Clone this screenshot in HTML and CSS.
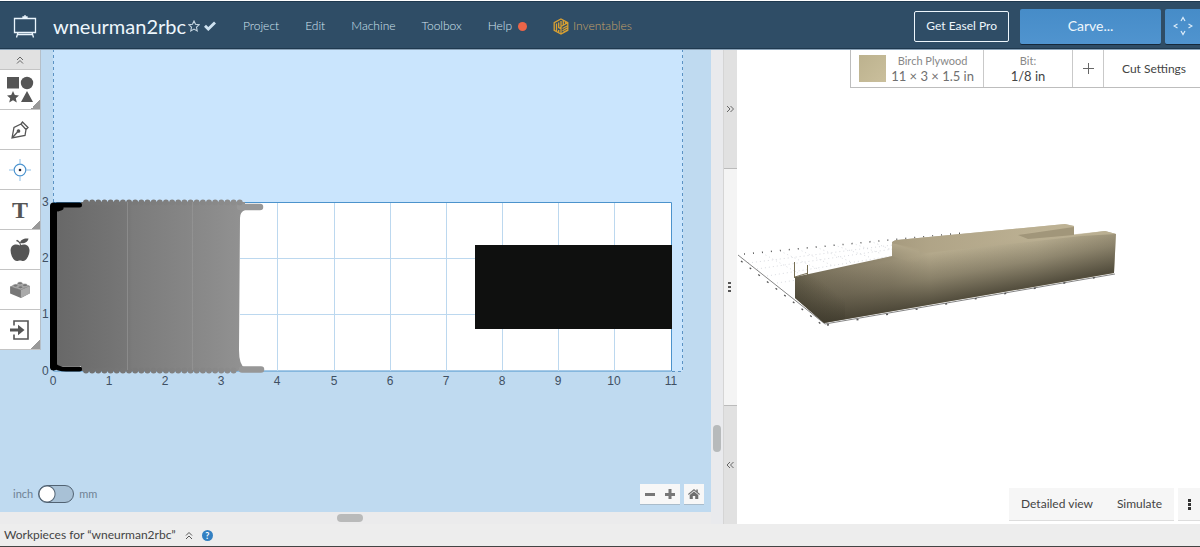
FILE: index.html
```html
<!DOCTYPE html>
<html lang="en">
<head>
<meta charset="utf-8">
<title>wneurman2rbc - Easel</title>
<link rel="stylesheet" href="styles.css">
</head>
<body>
<header class="topbar">
  <a class="logo" href="#" aria-label="Easel home">
    <svg width="24" height="24" viewBox="0 0 24 24" fill="none" stroke="#eaf5fd" stroke-width="1.3"><path d="M1.5 4.5h21v14h-21zM10 4.500v-1.500h4v1.500M12 1v2M5 18.500l-1.500 5M19 18.500l1.500 5M4.500 20.500h15"/></svg>
  </a>
  <h1 class="title">wneurman2rbc</h1>
  <button class="star" aria-label="Favorite"><svg width="12" height="12" viewBox="0 0 12 12" fill="none" stroke="#c6d6e2" stroke-width="1.100"><path d="M6 1l1.500 3.300 3.700.4-2.700 2.500.7 3.700L6 9.100l-3.200 1.800.7-3.700L.8 4.700l3.700-.4z"/></svg></button>
  <svg class="saved" width="12" height="10" viewBox="0 0 12 10" fill="none" stroke="#cfe2f0" stroke-width="2.800"><path d="M1 4.800l3.300 3.300L11 1.500"/></svg>
  <nav class="menu">
    <button>Project</button>
    <button>Edit</button>
    <button>Machine</button>
    <button>Toolbox</button>
    <button>Help<span class="dot"></span></button>
    <a href="#" class="inv"><svg width="16" height="17" viewBox="0 0 16 17" fill="none" stroke="#d9a032" stroke-width="1.300"><path d="M8 1l6.800 3.700v7.600L8 16l-6.800-3.700V4.700zM8 8.500V16M8 8.500l6.800-3.800M3.500 5.500v7.500M5.700 4.500v5l2.300 1.200M5.700 12v2.500M8 3v5.500M10.300 2.500v4.700M9.500 10.500l5-2.800M9.500 12.700l5-2.800M9.500 14.800l5-2.800M12.500 3.500v2"/></svg>Inventables</a>
  </nav>
  <button class="pro">Get Easel Pro</button>
  <button class="carve">Carve...</button>
  <button class="jog" aria-label="Jog machine"><svg width="20" height="20" viewBox="0 0 20 20" fill="none" stroke="#dcecf9" stroke-width="1.200"><path d="M8 5l2-3.500L12 5M8 15l2 3.500 2-3.500M4.500 8L1 10l3.500 2M15.500 8l3.500 2-3.500 2"/></svg></button>
</header>

<main class="work">
  <section class="design">
    <div class="canvas">
      <svg class="drawing" viewBox="0 50 711 462" preserveAspectRatio="xMinYMin meet">
        <defs>
          <linearGradient id="depth"><stop offset="0" stop-color="#686868"/><stop offset=".38" stop-color="#777"/><stop offset=".4" stop-color="#7b7b7b"/><stop offset=".75" stop-color="#888"/><stop offset="1" stop-color="#929292"/></linearGradient>
          <linearGradient id="edge" gradientUnits="userSpaceOnUse" x1="84" x2="262" y1="0" y2="0"><stop stop-color="#6f6f6f"/><stop offset="1" stop-color="#929292"/></linearGradient>
        </defs>
        <path fill="#cae5fd" d="M53 49h630v322H53z"/>
        <path fill="none" stroke="#5c93c4" stroke-dasharray="3 3" d="M53.500 49v155M682.500 49v322.500M672 371.500h11"/>
        <path fill="#fff" stroke="#4c93cc" d="M53.500 202.500h618v168.500h-618z"/>
        <path stroke="#bcd8ef" fill="none" d="M277.500 203v168M334.500 203v168M390.500 203v168M446.500 203v168M502.500 203v168M558.500 203v168M614.500 203v168M240 258.500h431M240 314.500h431"/>
        <path fill="#0f100f" d="M475 245h197v84H475z"/>
        <path fill="url(#depth)" d="M57 207h24v-5h164v8q-5 2-5 8l-1 132q0 15 6 18l-7 3H81v-5H57z"/>
        <path fill="none" stroke="#979797" stroke-width="6.500" stroke-linecap="round" d="M240 207h20M242 369.500h19"/>
        <path fill="none" stroke="url(#edge)" stroke-width="6" stroke-linecap="round" stroke-dasharray="0 6.150" d="M86 202.500l159 .1M86 370.500l152 .1"/>
        <path stroke="#999" fill="none" opacity=".6" d="M127.500 202v168M192.500 202v168"/>
        <path fill="none" stroke="#000" stroke-width="7" stroke-linecap="round" stroke-linejoin="round" d="M53.500 206v161"/>
        <path fill="none" stroke="#000" stroke-width="5" stroke-linecap="round" stroke-linejoin="round" d="M79.500 205H57M79.500 369H66q-8 0-11-3M52.500 346v20M58 209l3-1"/>
        <g class="ruler">
          <text x="42" y="206">3</text><text x="42" y="262">2</text><text x="42" y="318">1</text><text x="42" y="375">0</text>
          <g text-anchor="middle"><text x="53" y="385">0</text><text x="109" y="385">1</text><text x="165" y="385">2</text><text x="221" y="385">3</text><text x="277" y="385">4</text><text x="334" y="385">5</text><text x="390" y="385">6</text><text x="446" y="385">7</text><text x="502" y="385">8</text><text x="558" y="385">9</text><text x="614" y="385">10</text><text x="671" y="385">11</text></g>
        </g>
      </svg>
      <div class="tools">
        <button class="collapse" aria-label="Collapse tools"><svg width="8" height="8" viewBox="0 0 8 8" fill="none" stroke="#666"><path d="M1 4l3-3 3 3M1 7.500l3-3 3 3"/></svg></button>
        <button class="more" aria-label="Shapes"><svg width="28" height="28" viewBox="0 0 28 28" fill="#555"><path d="M1 1h12v11.500H1z"/><circle cx="21" cy="7" r="6.200"/><path d="M7 15l1.800 4 4.200.4-3.200 2.900 1 4.200L7 24.200l-3.800 2.300 1-4.200L1 19.400l4.200-.4zM21 15l6 11H15z"/></svg></button>
        <button aria-label="Pen"><svg width="20" height="20" viewBox="0 0 20 20" fill="none" stroke="#555" stroke-width="1.300"><path d="M2 18L4 7.500 11 4l5 5.500-1 6zM2 18l5.500-6M11 4l1.500-2 5.500 5.500-2 2"/><circle cx="8.500" cy="11" r="1.200" fill="#555"/></svg></button>
        <button aria-label="Drill point"><svg width="22" height="22" viewBox="0 0 22 22" fill="none" stroke="#4b93cf"><circle cx="11" cy="11" r="5.800" stroke-width="1.200"/><path stroke="#8fbfe6" d="M0 11h5M17 11h5M11 0v5M11 17v5"/><circle cx="11" cy="11" r="1.300" fill="#223" stroke="none"/></svg></button>
        <button class="more letter" aria-label="Text">T</button>
        <button aria-label="Icons"><svg width="20" height="24" viewBox="0 0 20 24" fill="#555"><path d="M10 7.500C6 5.500 1 6.500 .6 12c-.2 5 3 11 6.200 11 1.300 0 2-.6 3.200-.6s2 .6 3.300.6c3 0 6.300-6 6.200-11C19 6.500 14 5.500 10 7.500z"/><path d="M10 5c.5-3.500 4-5 8.500-4.500C18 4 14 6 10.500 5zM10 8C10 5 8.500 4 6 3l1-1.200C9.500 3 11.200 5 11 8z"/></svg></button>
        <button aria-label="Apps"><svg width="24" height="18" viewBox="0 0 24 20"><path fill="#777" d="M1 6l11-4 11 3.500v8L13 19 1 14z"/><path fill="#aaa" d="M13 10l10-4.500v8L13 19z"/><path fill="#999" d="M1 6l11-4 11 3.500L13 10z"/><g fill="#777" stroke="#ccc" stroke-width=".5"><ellipse cx="7" cy="5.200" rx="2.700" ry="1.600"/><ellipse cx="12" cy="2.600" rx="2.700" ry="1.600"/><ellipse cx="12.500" cy="7" rx="2.700" ry="1.600"/><ellipse cx="17.500" cy="4.700" rx="2.700" ry="1.600"/></g></svg></button>
        <button class="more" aria-label="Import"><svg width="20" height="20" viewBox="0 0 20 20" fill="none" stroke="#555" stroke-width="1.600"><path d="M4 5.500V1h14v18H4v-4.500"/><path stroke-width="3" d="M0 10h9"/><path fill="#555" stroke="none" d="M8 4.800l6.500 5.200L8 15.200z"/></svg></button>
      </div>
      <div class="controls">
        <label class="units">inch<input type="checkbox" role="switch">mm</label>
        <div class="zoomer">
          <button aria-label="Zoom out"><svg width="10" height="10"><path fill="#777" d="M0 4h10v3H0z"/></svg></button>
          <button aria-label="Zoom in"><svg width="10" height="10"><path fill="#777" d="M0 4h3.500V0h3v4H10v3H6.500v3h-3V7H0z"/></svg></button>
        </div>
        <button class="home" aria-label="Fit view"><svg width="12" height="10" viewBox="0 0 12 10" fill="#707070"><path d="M6 2.600L10.300 6v4H7.200V7H4.800v3H1.700V6zM6 0l2.300 1.900V.6h1.500v2.600L12 5l-.7.900L6 1.600.7 5.900 0 5z"/></svg></button>
      </div>
    </div>
    <div class="vscroll"><span></span></div>
    <div class="hscroll"><span></span></div>
  </section>

  <div class="divider">
    <button aria-label="Hide preview"><svg width="8" height="8" viewBox="0 0 8 8" fill="none" stroke="#666"><path d="M1 1l3 3-3 3M4.500 1l3 3-3 3"/></svg></button>
    <div class="grip"><svg width="4" height="10" fill="#555"><path d="M0 0h3v2H0zM0 4h3v2H0zM0 8h3v2H0z"/></svg></div>
    <button aria-label="Hide design"><svg width="8" height="8" viewBox="0 0 8 8" fill="none" stroke="#666"><path d="M4 1L1 4l3 3M7.500 1l-3 3 3 3"/></svg></button>
  </div>

  <section class="preview">
    <svg class="model" viewBox="737 50 463 474" preserveAspectRatio="xMinYMin meet">
      <defs>
        <linearGradient id="wood" gradientUnits="userSpaceOnUse" x1="795" y1="0" x2="1116" y2="0"><stop stop-color="#6e6752"/><stop offset=".15" stop-color="#837a64"/><stop offset=".3" stop-color="#978d74"/><stop offset=".42" stop-color="#b3a88b"/><stop offset=".75" stop-color="#bfb496"/><stop offset="1" stop-color="#b5aa8d"/></linearGradient>
        <linearGradient id="shade" gradientUnits="userSpaceOnUse" x1="960" y1="299" x2="951" y2="250"><stop stop-color="#3a3629" stop-opacity=".8"/><stop offset=".5" stop-color="#3a3629" stop-opacity=".35"/><stop offset="1" stop-color="#3a3629" stop-opacity="0"/></linearGradient>
        <linearGradient id="corner" gradientUnits="userSpaceOnUse" x1="808" y1="311" x2="828" y2="286"><stop stop-color="#3a3629" stop-opacity=".5"/><stop offset="1" stop-color="#3a3629" stop-opacity="0"/></linearGradient>
        <linearGradient id="step" gradientUnits="userSpaceOnUse" x1="905" y1="244" x2="902" y2="264"><stop stop-color="#b6ab8e"/><stop offset="1" stop-color="#a3987c" stop-opacity="0"/></linearGradient>
        <linearGradient id="top" gradientUnits="userSpaceOnUse" x1="892" y1="0" x2="1116" y2="0"><stop stop-color="#ab9f82"/><stop offset="1" stop-color="#c3b89a"/></linearGradient>
      </defs>
      <g fill="none" stroke="#c9ccd3" stroke-width=".7" stroke-dasharray="1 3"><path d="M748 263l145-18M757 269l136-20M767 276l125-20M777 283l60-9M762 253l45 25M780 251l40 19M798 249l35 17M816 247l35 15M834 245l35 12M852 243l30 11M870 241l22 9"/></g>
      <path fill="none" stroke="#555" stroke-width="1.500" stroke-dasharray="1 8" d="M744 254l218-21"/>
      <path stroke="#666" fill="none" stroke-width=".8" d="M738 255l87 69 290-50"/>
      <path fill="none" stroke="#555" stroke-width="1.300" stroke-dasharray="2 9" d="M741 261l80 63"/>
      <path fill="none" stroke="#555" stroke-width="1.500" stroke-dasharray="2 28" d="M827 325l294-52"/>
      <g id="body">
        <path fill="url(#wood)" d="M795 277l97-21v-13q0-2 5-3l168-16 9 2v9l31-4 11 3-2 39-290 50-29-25z"/>
        <path fill="url(#shade)" d="M795 277l97-21v-13q0-2 5-3l168-16 9 2v9l31-4 11 3-2 39-290 50-29-25z"/>
        <path fill="url(#corner)" d="M795 277l50-11v53l-21 4-29-25z"/>
      </g>
      <path fill="url(#step)" d="M892 243l27 6 2 9q-3 6-12 4l-17-6z"/>
      <path fill="url(#top)" opacity=".75" d="M892 243q0-2 5-3l168-16 9 2-52 8 8 5 75-8 11 3-35 2-155 17q-12-3-34-10z"/>
      <path fill="#a1967a" d="M1018 235l56-8v8l-46 4z"/>
      <path stroke="#776f54" fill="none" d="M794.500 262v16M807.500 265v10M795 277l13-4"/>
    </svg>
    <div class="job">
      <button class="material"><span class="swatch"></span><span><small>Birch Plywood</small><b>11 × 3 × 1.5 in</b></span></button>
      <button class="bit"><small>Bit:</small><b>1/8 in</b></button>
      <button class="add" aria-label="Add bit"><svg width="11" height="11" stroke="#666"><path d="M0 5.500h11M5.500 0v11"/></svg></button>
      <button class="cut">Cut Settings</button>
    </div>
    <div class="viewbar">
      <button class="detail">Detailed view</button>
      <button class="sim">Simulate</button>
      <button class="dots" aria-label="More"><svg width="3" height="11" fill="#333"><path d="M0 0h3v3H0zM0 4h3v3H0zM0 8h3v3H0z"/></svg></button>
    </div>
  </section>
</main>

<footer class="pieces">
  <button>Workpieces for “wneurman2rbc”<svg width="8" height="9" viewBox="0 0 8 9" fill="none" stroke="#555"><path d="M1 4.500l3-3 3 3M1 8l3-3 3 3"/></svg></button>
  <button class="help" aria-label="Help">?</button>
</footer>
</body>
</html>
```

FILE: styles.css
```css
* { box-sizing: border-box; }
body {
  margin: 0;
  height: 100vh;
  display: flex;
  flex-direction: column;
  overflow: hidden;
  font: 12px/16px Lato, sans-serif;
  color: #444;
}
button {
  font: inherit;
  color: inherit;
  background: none;
  border: 0;
  padding: 0;
  cursor: pointer;
}
a { color: inherit; text-decoration: none; }
svg { display: block; }

.topbar {
  flex: none;
  height: 50px;
  display: flex;
  align-items: center;
  padding: 2px 0 0 13px;
  background: #2f4d66;
  border-top: 1px solid #fff;
  border-bottom: 1px solid #8ba3b8;
  box-shadow: inset 0 1px #1f394f, inset 0 -1px #1f394f;
  color: #d3e4f0;
}
.title {
  margin: 0 2px 0 16px;
  font-size: 20px;
  line-height: 24px;
  font-weight: 400;
  color: #edf6fc;
}
.saved { margin-left: 4px; }
.menu {
  flex: 1;
  display: flex;
  align-items: center;
  gap: 26px;
  margin-left: 27px;
  font-weight: 300;
}
.menu button, .inv { display: flex; align-items: center; }
.dot {
  width: 9px;
  height: 9px;
  margin-left: 6px;
  border-radius: 50%;
  background: #ec6548;
}
.inv { gap: 4px; color: #c8a468; }
.pro {
  height: 31px;
  padding: 0 11px;
  border: 1px solid #edf6fc;
  border-radius: 2px;
  color: #edf6fc;
}
.carve, .jog {
  height: 35px;
  border-radius: 2px;
  background: linear-gradient(#468cc8, #5094cf);
  box-shadow: 0 1px #16293b;
  color: #edf6fc;
}
.carve { width: 141px; margin: 0 4px 0 11px; font-size: 14px; }
.jog { width: 35px; padding-left: 8px; border-radius: 2px 0 0 2px; }

.work { flex: 1; min-height: 0; display: flex; }
.design {
  flex: 723 1 0;
  min-width: 0;
  display: grid;
  grid-template: minmax(0, 1fr) 12px / minmax(0, 1fr) 12px;
  background: #e9eaed;
}
.canvas {
  position: relative;
  display: flex;
  flex-direction: column;
  justify-content: space-between;
  background: #bfdaf0;
  overflow: hidden;
}
.drawing, .model {
  position: absolute;
  inset: 0;
  width: 100%;
  height: 100%;
}
.ruler { font: 12px "Liberation Sans", sans-serif; fill: #3f5063; }
.tools, .controls { position: relative; }
.tools {
  width: 41px;
  display: flex;
  flex-direction: column;
  background: #fff;
  border-right: 1px solid #b5bfc8;
}
.tools button {
  height: 40px;
  display: flex;
  align-items: center;
  justify-content: center;
  border-bottom: 1px solid #c4c4c4;
}
.tools .collapse { height: 20px; background: #e1e1e1; }
.tools .more { background: linear-gradient(135deg, transparent 50%, #999 50%) right bottom / 9px 9px no-repeat; }
.tools .letter { font: bold 24px/24px "Liberation Serif", serif; color: #555; }
.controls {
  display: flex;
  align-items: center;
  padding: 0 7px 8px 13px;
}
.units {
  flex: 1;
  display: flex;
  align-items: center;
  gap: 5px;
  font-size: 11px;
  color: #6f8294;
}
.units input {
  appearance: none;
  width: 36px;
  height: 18px;
  margin: 0;
  border: 1px solid #516272;
  border-radius: 9px;
  background: radial-gradient(circle at 8px 8px, #fff 7px, #516272 8px, #a8c1d6 9px);
}
.zoomer { display: flex; margin-right: 4px; }
.zoomer button, .home {
  width: 20px;
  height: 20px;
  display: flex;
  align-items: center;
  justify-content: center;
  background: #f7f7f7;
  box-shadow: 0 1px #a9bccb;
}
.vscroll, .hscroll { display: flex; }
.vscroll { padding-top: 375px; justify-content: center; }
.vscroll span { width: 8px; height: 27px; border-radius: 4px; background: #b7babb; }
.hscroll { padding-left: 337px; align-items: center; background: #ebebec; }
.hscroll span { width: 26px; height: 8px; border-radius: 4px; background: #b9baba; }

.divider { flex: 0 0 14px; display: flex; flex-direction: column; border-left: 1px solid #d5d5d5; }
.divider button, .grip {
  flex: 1;
  display: flex;
  align-items: center;
  justify-content: center;
  padding-right: 2px;
  background: #e1e1e1;
}
.grip { flex: 2; background: #f4f4f4; border: solid #bbb; border-width: 1px 0; }

.preview {
  flex: 463 1 0;
  min-width: 0;
  position: relative;
  display: flex;
  flex-direction: column;
  justify-content: space-between;
  background: #fff;
}
.job, .viewbar { position: relative; align-self: flex-end; display: flex; }
.job { height: 38px; border: solid #bdbdbd; border-width: 0 0 1px 1px; background: #fff; }
.job button { display: flex; align-items: center; justify-content: center; border-right: 1px solid #c9c9c9; }
.job small, .job b { display: block; font-weight: 400; }
.job small { font-size: 11px; line-height: 15px; color: #888; }
.job b { font-size: 13px; line-height: 17px; }
.job .material { padding: 0 9px 0 8px; gap: 5px; color: #707070; }
.swatch { width: 27px; height: 27px; background: linear-gradient(135deg, #bcb28e, #cabf9c); }
.job .bit { width: 89px; flex-direction: column; }
.job .add { width: 31px; }
.job .cut { width: 96px; padding-left: 4px; border: 0; }
.viewbar { margin-bottom: 4px; }
.viewbar button { height: 32px; background: #f6f6f6; box-shadow: 0 1px #ddd; }
.detail { width: 96px; }
.sim { width: 69px; }
.viewbar .dots { width: 22px; margin-left: 4px; padding-left: 10px; }

.pieces {
  flex: none;
  height: 23px;
  display: flex;
  align-items: center;
  gap: 9px;
  padding-left: 4px;
  background: #ededed;
  border-bottom: 1px solid #444;
}
.pieces button { display: flex; align-items: center; gap: 9px; }
.pieces .help {
  width: 11px;
  height: 11px;
  justify-content: center;
  border-radius: 50%;
  background: #3380c2;
  color: #fff;
  font-size: 9px;
  line-height: 11px;
  font-weight: 700;
}
```
